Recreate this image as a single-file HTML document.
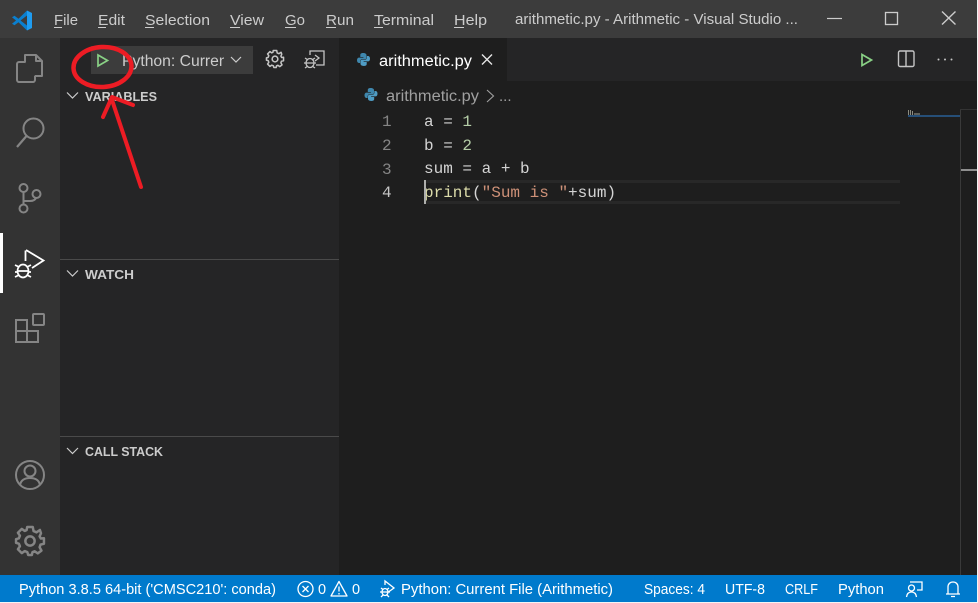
<!DOCTYPE html>
<html><head><meta charset="utf-8"><title>arithmetic.py - Arithmetic - Visual Studio Code</title>
<style>
html,body{margin:0;padding:0;background:#1e1e1e;overflow:hidden}
svg{display:block;font-family:"Liberation Sans",sans-serif}
.m{font-size:15px;fill:#cccccc}
.s{font-size:14.5px;fill:#ffffff}
.h{font-size:13px;font-weight:bold;fill:#cccccc}
.c{font-family:"Liberation Mono",monospace;font-size:16px;fill:#d4d4d4}
.n{font-family:"Liberation Mono",monospace;font-size:16px;fill:#858585}
.i{fill:none;stroke:#858585;stroke-width:2}
</style></head><body>
<svg width="978" height="603" viewBox="0 0 978 603" xmlns="http://www.w3.org/2000/svg">
<defs>
<clipPath id="cl"><rect x="91" y="46" width="133" height="28"/></clipPath>
<g id="py">
<path d="M6.2 0C3.4 0 3.300 1.300 3.300 2.200V4H6.400V4.600H2C.8 4.600 0 5.600 0 7.300S.8 10 2 10H3.100V8.300C3.100 7.200 4 6.300 5 6.300H8C8.900 6.300 9.500 5.600 9.500 4.800V2.200C9.500 .8 8.200 0 6.200 0Z" fill="#3f87ad"/>
<path d="M6.800 13C9.600 13 9.700 11.700 9.700 10.800V9H6.600V8.400H11C12.200 8.400 13 7.400 13 5.700S12.200 3 11 3H9.900V4.700C9.900 5.800 9 6.700 8 6.700H5C4.100 6.700 3.500 7.400 3.500 8.200V10.800C3.500 12.200 4.800 13 6.800 13Z" fill="#4f9cc4"/>
</g>
<g id="gear">
<path d="M8.200 1H11.800L12.300 3.600L14.200 4.400L16.400 2.900L17.100 5L16.200 7L17 8.400L19 8.200V11.800L16.800 12.300L16.200 14L17.400 16.200L15 18L13 16.600L11.600 17.200L11.200 19H8.800L8.300 17.200L6.600 16.500L4.700 17.800L2.200 15.300L3.500 13.400L2.800 11.700L1 11.200V8.800L2.800 8.300L3.500 6.600L2.200 4.700L4.700 2.200L6.600 3.500L7.800 3Z" fill="none" stroke="currentColor" stroke-width="1.600" stroke-linejoin="round"/>
<circle cx="10" cy="10" r="3" fill="none" stroke="currentColor" stroke-width="1.600"/>
</g>
</defs>

<!-- base areas -->
<rect width="978" height="603" fill="#1e1e1e"/>
<rect width="978" height="38" fill="#3c3c3c"/>
<rect y="38" width="60" height="537" fill="#333333"/>
<rect x="60" y="38" width="279" height="537" fill="#252526"/>
<rect x="339" y="38" width="639" height="43" fill="#252526"/>
<rect x="339" y="38" width="168" height="43" fill="#1e1e1e"/>
<rect y="575" width="978" height="27" fill="#007acc"/>
<rect y="602" width="978" height="1" fill="#f4f4f4"/>
<rect x="977" width="1" height="603" fill="#f4f4f4"/>

<!-- VS Code logo -->
<path d="M27 10.500L32 13V28L27 30.500Z" fill="#1f9cf0"/>
<path d="M27 10.500L18.500 18.800L14.500 15.800L12 17.200L16 20.500L12 23.800L14.500 25.200L18.500 22.200L27 30.500V25.500L20.500 20.500L27 15.500Z" fill="#0a7fcf"/>

<!-- menu -->
<g class="m">
<text x="54" y="25" textLength="24" lengthAdjust="spacingAndGlyphs">File</text>
<text x="98" y="25" textLength="27" lengthAdjust="spacingAndGlyphs">Edit</text>
<text x="145" y="25" textLength="65" lengthAdjust="spacingAndGlyphs">Selection</text>
<text x="230" y="25" textLength="34" lengthAdjust="spacingAndGlyphs">View</text>
<text x="285" y="25" textLength="20" lengthAdjust="spacingAndGlyphs">Go</text>
<text x="326" y="25" textLength="28" lengthAdjust="spacingAndGlyphs">Run</text>
<text x="374" y="25" textLength="60" lengthAdjust="spacingAndGlyphs">Terminal</text>
<text x="454" y="25" textLength="33" lengthAdjust="spacingAndGlyphs">Help</text>
<text x="515" y="24" textLength="283" lengthAdjust="spacingAndGlyphs">arithmetic.py - Arithmetic - Visual Studio ...</text>
</g>
<g stroke="#cccccc" stroke-width="1">
<path d="M54 27.500H62M98 27.500H106M145 27.500H154M230 27.500H240M285 27.500H296M326 27.500H336M374 27.500H383M454 27.500H464"/>
</g>

<!-- window controls -->
<path d="M827 18.500H842" stroke="#cccccc" stroke-width="1.200"/>
<rect x="885.500" y="12.500" width="12" height="12" fill="none" stroke="#cccccc" stroke-width="1.300"/>
<path d="M942 11.500L955.500 24.500M955.500 11.500L942 24.500" stroke="#cccccc" stroke-width="1.400"/>

<!-- activity bar icons -->
<g class="i">
<path d="M25 55H36L42 61V76H25Z M36 55V61H42" stroke-linejoin="round"/>
<path d="M25 62H19C18 62 17 63 17 64V80C17 81 18 82 19 82H33C34 82 35 81 35 80V76" fill="#333333" stroke-linejoin="round"/>
<circle cx="33.500" cy="128.500" r="10"/>
<path d="M26.500 136L17 147" stroke-width="2.200"/>
<circle cx="23.500" cy="188" r="4"/>
<circle cx="23.500" cy="208.500" r="4"/>
<circle cx="36.500" cy="194" r="4"/>
<path d="M23.500 192V204.500M23.500 201H30C33 201 35 200 36 198"/>
<rect x="16" y="320" width="11" height="11"/>
<rect x="16" y="331" width="11" height="11"/>
<rect x="27" y="331" width="11" height="11"/>
<rect x="33" y="314" width="11" height="11" rx="1"/>
<circle cx="30" cy="475" r="14"/>
<circle cx="30" cy="471" r="5.500"/>
<path d="M20 485C21 480 25 478 30 478S39 480 40 485"/>
</g>
<rect y="233" width="3" height="60" fill="#ffffff"/>
<path d="M25.500 250.500V261M26 250L43.500 260.500L32 268" fill="none" stroke="#ffffff" stroke-width="1.800"/>
<g fill="none" stroke="#ffffff" stroke-width="1.700">
<ellipse cx="23" cy="271" rx="5.500" ry="6.500"/>
<path d="M17 271H29M15 265L19 267M31 265L27 267M15 272H18M28 272H31M15 277L19 275M31 277L27 275"/>
</g>
<use href="#gear" transform="translate(14.500 525.500) scale(1.550)" color="#858585"/>

<!-- debug toolbar -->
<rect x="91" y="46" width="162" height="28" fill="#3c3c3c"/>
<path d="M98 55L107.500 60.500L98 66Z" fill="none" stroke="#89d185" stroke-width="1.700"/>
<g clip-path="url(#cl)">
<text x="122" y="66" font-size="15.500" fill="#cccccc" textLength="110" lengthAdjust="spacingAndGlyphs">Python: Current</text>
</g>
<path d="M231 57L236 62L241 57" fill="none" stroke="#cccccc" stroke-width="1.200"/>
<use href="#gear" transform="translate(265.500 49.500) scale(.95)" color="#c5c5c5"/>
<path d="M310 55V51H324V65H316M315 55L319 58L315 61" fill="none" stroke="#c5c5c5" stroke-width="1.300"/>
<g fill="none" stroke="#c5c5c5" stroke-width="1.300">
<ellipse cx="310" cy="63" rx="4" ry="4.500"/>
<path d="M304 63H316M305 58L308 60M315 58L312 60M305 68L308 66M315 68L312 66"/>
</g>

<!-- sidebar sections -->
<g fill="none" stroke="#cccccc" stroke-width="1.200">
<path d="M67 92.500L72.500 98L78 92.500"/>
<path d="M67 270.500L72.500 276L78 270.500"/>
<path d="M67 448L72.500 453.500L78 448"/>
</g>
<text class="h" x="85" y="101" textLength="72" lengthAdjust="spacingAndGlyphs">VARIABLES</text>
<text class="h" x="85" y="279" textLength="49" lengthAdjust="spacingAndGlyphs">WATCH</text>
<text class="h" x="85" y="456" textLength="78" lengthAdjust="spacingAndGlyphs">CALL STACK</text>
<rect x="60" y="259" width="279" height="1" fill="#4a4a4a"/>
<rect x="60" y="436" width="279" height="1" fill="#4a4a4a"/>

<!-- tab -->
<use href="#py" x="357" y="53"/>
<text x="379" y="66" font-size="15.500" fill="#ffffff" textLength="93" lengthAdjust="spacingAndGlyphs">arithmetic.py</text>
<path d="M482 54.500L492 64.500M492 54.500L482 64.500" stroke="#e6e6e6" stroke-width="1.400"/>

<!-- editor actions -->
<path d="M862 54.500L871.500 60L862 65.500Z" fill="none" stroke="#89d185" stroke-width="1.700"/>
<rect x="898.500" y="51" width="15.500" height="15.500" rx="1.500" fill="none" stroke="#c5c5c5" stroke-width="1.400"/>
<path d="M906 51V66" stroke="#c5c5c5" stroke-width="1.400"/>
<g fill="#c5c5c5"><circle cx="938.500" cy="59.500" r="1"/><circle cx="945" cy="59.500" r="1"/><circle cx="951.500" cy="59.500" r="1"/></g>

<!-- breadcrumb -->
<use href="#py" x="364.500" y="88"/>
<text x="386" y="101" font-size="15.500" fill="#a0a0a0" textLength="93" lengthAdjust="spacingAndGlyphs">arithmetic.py</text>
<path d="M487 90L493.500 96L487 102" fill="none" stroke="#a0a0a0" stroke-width="1.100"/>
<text x="499" y="101" font-size="15" fill="#a0a0a0">...</text>

<!-- line highlight -->
<rect x="424" y="180" width="476" height="3" fill="#282828"/>
<rect x="424" y="201" width="476" height="3" fill="#282828"/>

<!-- code -->
<text class="n" x="382" y="126">1</text>
<text class="n" x="382" y="150">2</text>
<text class="n" x="382" y="174">3</text>
<text class="n" x="382" y="197" style="fill:#c6c6c6">4</text>
<text class="c" x="424" y="126" xml:space="preserve">a = <tspan fill="#b5cea8">1</tspan></text>
<text class="c" x="424" y="150" xml:space="preserve">b = <tspan fill="#b5cea8">2</tspan></text>
<text class="c" x="424" y="173" xml:space="preserve">sum = a + b</text>
<text class="c" x="424" y="197" xml:space="preserve"><tspan fill="#dcdcaa">print</tspan>(<tspan fill="#ce9178">"Sum is "</tspan>+sum)</text>
<rect x="424" y="180" width="2" height="24" fill="#aeafad"/>

<!-- minimap / overview -->
<g fill="#8c8c80">
<rect x="908" y="110" width="1" height="5"/><rect x="910" y="110" width="1" height="5"/><rect x="912" y="111" width="1" height="4"/><rect x="914" y="113" width="6" height="2" opacity=".6"/>
</g>
<rect x="908" y="115" width="52" height="2" fill="#264f78"/>
<rect x="960" y="109" width="1" height="466" fill="#3a3a3a"/>
<rect x="960" y="109" width="17" height="1" fill="#333333"/>
<rect x="961" y="169" width="16" height="2" fill="#8f8f8f"/>

<!-- status bar -->
<g class="s">
<text x="19" y="594" textLength="257" lengthAdjust="spacingAndGlyphs">Python 3.8.5 64-bit ('CMSC210': conda)</text>
<text x="318" y="594">0</text>
<text x="352" y="594">0</text>
<text x="401" y="594" textLength="212" lengthAdjust="spacingAndGlyphs">Python: Current File (Arithmetic)</text>
<text x="644" y="594" textLength="61" lengthAdjust="spacingAndGlyphs">Spaces: 4</text>
<text x="725" y="594" textLength="40" lengthAdjust="spacingAndGlyphs">UTF-8</text>
<text x="785" y="594" textLength="33" lengthAdjust="spacingAndGlyphs">CRLF</text>
<text x="838" y="594" textLength="46" lengthAdjust="spacingAndGlyphs">Python</text>
</g>
<g fill="none" stroke="#ffffff" stroke-width="1.300">
<circle cx="305.500" cy="589" r="7.500"/>
<path d="M302.500 586L308.500 592M308.500 586L302.500 592"/>
<path d="M339 581.500L347 596H331Z" stroke-linejoin="round"/>
<path d="M339 586.500V591.500M339 593V594.500"/>
<path d="M385 585V581L394 588L387 593"/>
<ellipse cx="385" cy="592" rx="3" ry="3.500"/>
<path d="M380 592H390M381 588L383 589.500M389 588L387 589.500M381 597L383 595M389 597L387 595"/>
<path d="M910 582H922V590H917"/>
<circle cx="911.500" cy="588" r="3"/>
<path d="M906.500 597C907 593.500 909 592 911.500 592S916 593.500 916.500 597"/>
<path d="M946 594H960M948 594V587C948 584 950 582 953 582S958 584 958 587V594M951 596.500H955"/>
</g>

<!-- hand-drawn annotation -->
<g fill="none" stroke="#ed1c24" stroke-linecap="round" stroke-linejoin="round">
<ellipse cx="102.500" cy="67" rx="29" ry="20" stroke-width="4.500" transform="rotate(-3 102.500 67)"/>
<path d="M141 187L112 100" stroke-width="4"/>
<path d="M103 117L112 97L133 105" stroke-width="4"/>
</g>
</svg>
</body></html>
